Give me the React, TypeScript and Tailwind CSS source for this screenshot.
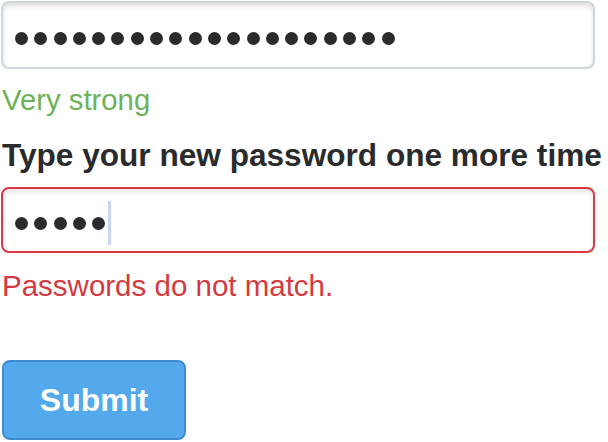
import React from "react";

const Dots = ({ n }: { n: number }) => (
  <div className="flex items-center gap-[6.3px]">
    {Array.from({ length: n }).map((_, i) => (
      <span key={i} className="block w-[13px] h-[13px] rounded-full bg-[#292b2c]" />
    ))}
  </div>
);

export default function App() {
  return (
    <div
      className="w-[608px] h-[442px] bg-white overflow-hidden flex flex-col items-start"
      style={{ fontFamily: '"Liberation Sans", Arial, sans-serif' }}
    >
      <div className="mt-[1px] ml-[1px] w-[594px] h-[68px] border-2 border-[#cdd6de] rounded-[8px] bg-white shadow-[inset_0_3px_5px_rgba(0,0,0,0.13)] flex items-center pl-[12px] pt-[6px]">
        <Dots n={20} />
      </div>
      <div className="mt-[13px] ml-[2px] h-[36px] leading-[36px] text-[29.3px] text-[#6db257]">
        Very strong
      </div>
      <div className="mt-[17px] ml-[2px] h-[40px] leading-[40px] text-[31.6px] font-bold text-[#292b2c] whitespace-nowrap">
        Type your new password one more time
      </div>
      <div className="mt-[12px] ml-[1px] w-[594px] h-[66px] border-2 border-[#dc3545] rounded-[8px] bg-white shadow-[inset_0_3px_5px_rgba(0,0,0,0.1)] flex items-center pl-[12px] pt-[6px]">
        <Dots n={5} />
        <span className="block ml-[3px] w-[3px] h-[44px] bg-[#c9d5f8]" />
      </div>
      <div className="mt-[15px] ml-[2px] h-[36px] leading-[36px] text-[29.5px] text-[#d33a41]">
        Passwords do not match.
      </div>
      <button className="mt-[56px] ml-[2px] w-[184px] h-[80px] rounded-[8px] border-2 border-[#3d8bd0] bg-[#54a9ec] text-white font-bold text-[32px] leading-none flex items-center justify-center">
        Submit
      </button>
    </div>
  );
}
